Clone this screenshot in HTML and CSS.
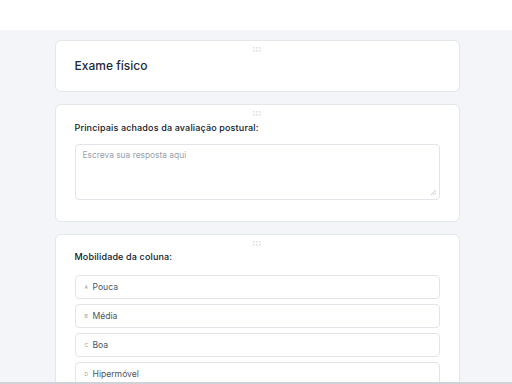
FILE: index.html
```html
<!DOCTYPE html>
<html lang="pt">
<head>
    <meta charset="UTF-8">
    <meta name="viewport" content="width=device-width, initial-scale=1.0">
    <title>Exame físico</title>
    <link rel="stylesheet" href="styles.css">
</head>
<body>
    <div class="topbar"></div>

    <div class="page">
        <div class="card card-title">
            <div class="handle">
                <svg width="8" height="5" viewBox="0 0 8 5"><g fill="#dde0e4"><rect x="0" y="0" width="1.6" height="1.6"/><rect x="3" y="0" width="1.6" height="1.6"/><rect x="6" y="0" width="1.6" height="1.6"/><rect x="0" y="3" width="1.6" height="1.6"/><rect x="3" y="3" width="1.6" height="1.6"/><rect x="6" y="3" width="1.6" height="1.6"/></g></svg>
            </div>
            <h1>Exame físico</h1>
        </div>

        <div class="card">
            <div class="handle">
                <svg width="8" height="5" viewBox="0 0 8 5"><g fill="#dde0e4"><rect x="0" y="0" width="1.6" height="1.6"/><rect x="3" y="0" width="1.6" height="1.6"/><rect x="6" y="0" width="1.6" height="1.6"/><rect x="0" y="3" width="1.6" height="1.6"/><rect x="3" y="3" width="1.6" height="1.6"/><rect x="6" y="3" width="1.6" height="1.6"/></g></svg>
            </div>
            <div class="question">Principais achados da avaliação postural:</div>
            <div class="answer-wrap">
                <textarea class="answer" placeholder="Escreva sua resposta aqui"></textarea>
                <svg class="grip" width="6" height="6" viewBox="0 0 6 6"><path d="M1 6 L6 1 M3.5 6 L6 3.5" stroke="#b8bec6" stroke-width="0.8"/></svg>
            </div>
        </div>

        <div class="card card-options">
            <div class="handle">
                <svg width="8" height="5" viewBox="0 0 8 5"><g fill="#dde0e4"><rect x="0" y="0" width="1.6" height="1.6"/><rect x="3" y="0" width="1.6" height="1.6"/><rect x="6" y="0" width="1.6" height="1.6"/><rect x="0" y="3" width="1.6" height="1.6"/><rect x="3" y="3" width="1.6" height="1.6"/><rect x="6" y="3" width="1.6" height="1.6"/></g></svg>
            </div>
            <div class="question">Mobilidade da coluna:</div>
            <div class="options">
                <div class="option"><span class="key">A</span>Pouca</div>
                <div class="option"><span class="key">B</span>Média</div>
                <div class="option"><span class="key">C</span>Boa</div>
                <div class="option"><span class="key">D</span>Hipermóvel</div>
            </div>
        </div>
    </div>

    <div class="bottombar"></div>
</body>
</html>
```

FILE: styles.css
```css
body {
    margin: 0;
    font-family: Inter, "Noto Sans", sans-serif;
    background-color: #f3f5f8;
    color: #1f2937;
    overflow: hidden;
}
.topbar {
    height: 30px;
    background: white;
}
.page {
    width: 405px;
    margin: 0 auto;
    padding: 10px 0 0 2px;
    display: flex;
    flex-direction: column;
    gap: 12px;
}
.card {
    background: white;
    border: 1px solid #e3e7ec;
    border-radius: 6px;
    padding: 3px 19px 21px;
}
.card-title {
    padding-bottom: 17px;
}
.handle {
    height: 10px;
    display: flex;
    align-items: center;
    justify-content: center;
}
h1 {
    margin: 4px 0 0;
    font-size: 12px;
    line-height: 16px;
    font-weight: 500;
    color: #1f2937;
}
.question {
    margin-top: 4px;
    font-size: 9px;
    letter-spacing: 0.15px;
    line-height: 12px;
    font-weight: 500;
    color: #111827;
}
.answer-wrap {
    position: relative;
    margin-top: 10px;
}
.answer {
    display: block;
    box-sizing: border-box;
    width: 100%;
    height: 56px;
    padding: 5px 7px;
    border: 1px solid #e1e5ea;
    border-radius: 4px;
    font-family: inherit;
    font-size: 8.4px;
    color: #374151;
    resize: none;
    outline: none;
}
.answer::placeholder {
    color: #9aa1ab;
}
.grip {
    position: absolute;
    right: 4px;
    bottom: 5px;
}
.card-options .question {
    margin-top: 3px;
}
.options {
    margin-top: 12px;
    display: flex;
    flex-direction: column;
    gap: 5px;
}
.option {
    height: 24px;
    box-sizing: border-box;
    border: 1px solid #e1e5ea;
    border-radius: 4px;
    padding: 0 9px;
    display: flex;
    align-items: center;
    font-size: 8.6px;
    color: #4b5563;
}
.key {
    font-size: 5px;
    color: #9aa1ab;
    width: 8px;
}
.bottombar {
    position: fixed;
    left: 0;
    right: 0;
    bottom: 0;
    height: 2px;
    background: #cfd3d8;
}
```
